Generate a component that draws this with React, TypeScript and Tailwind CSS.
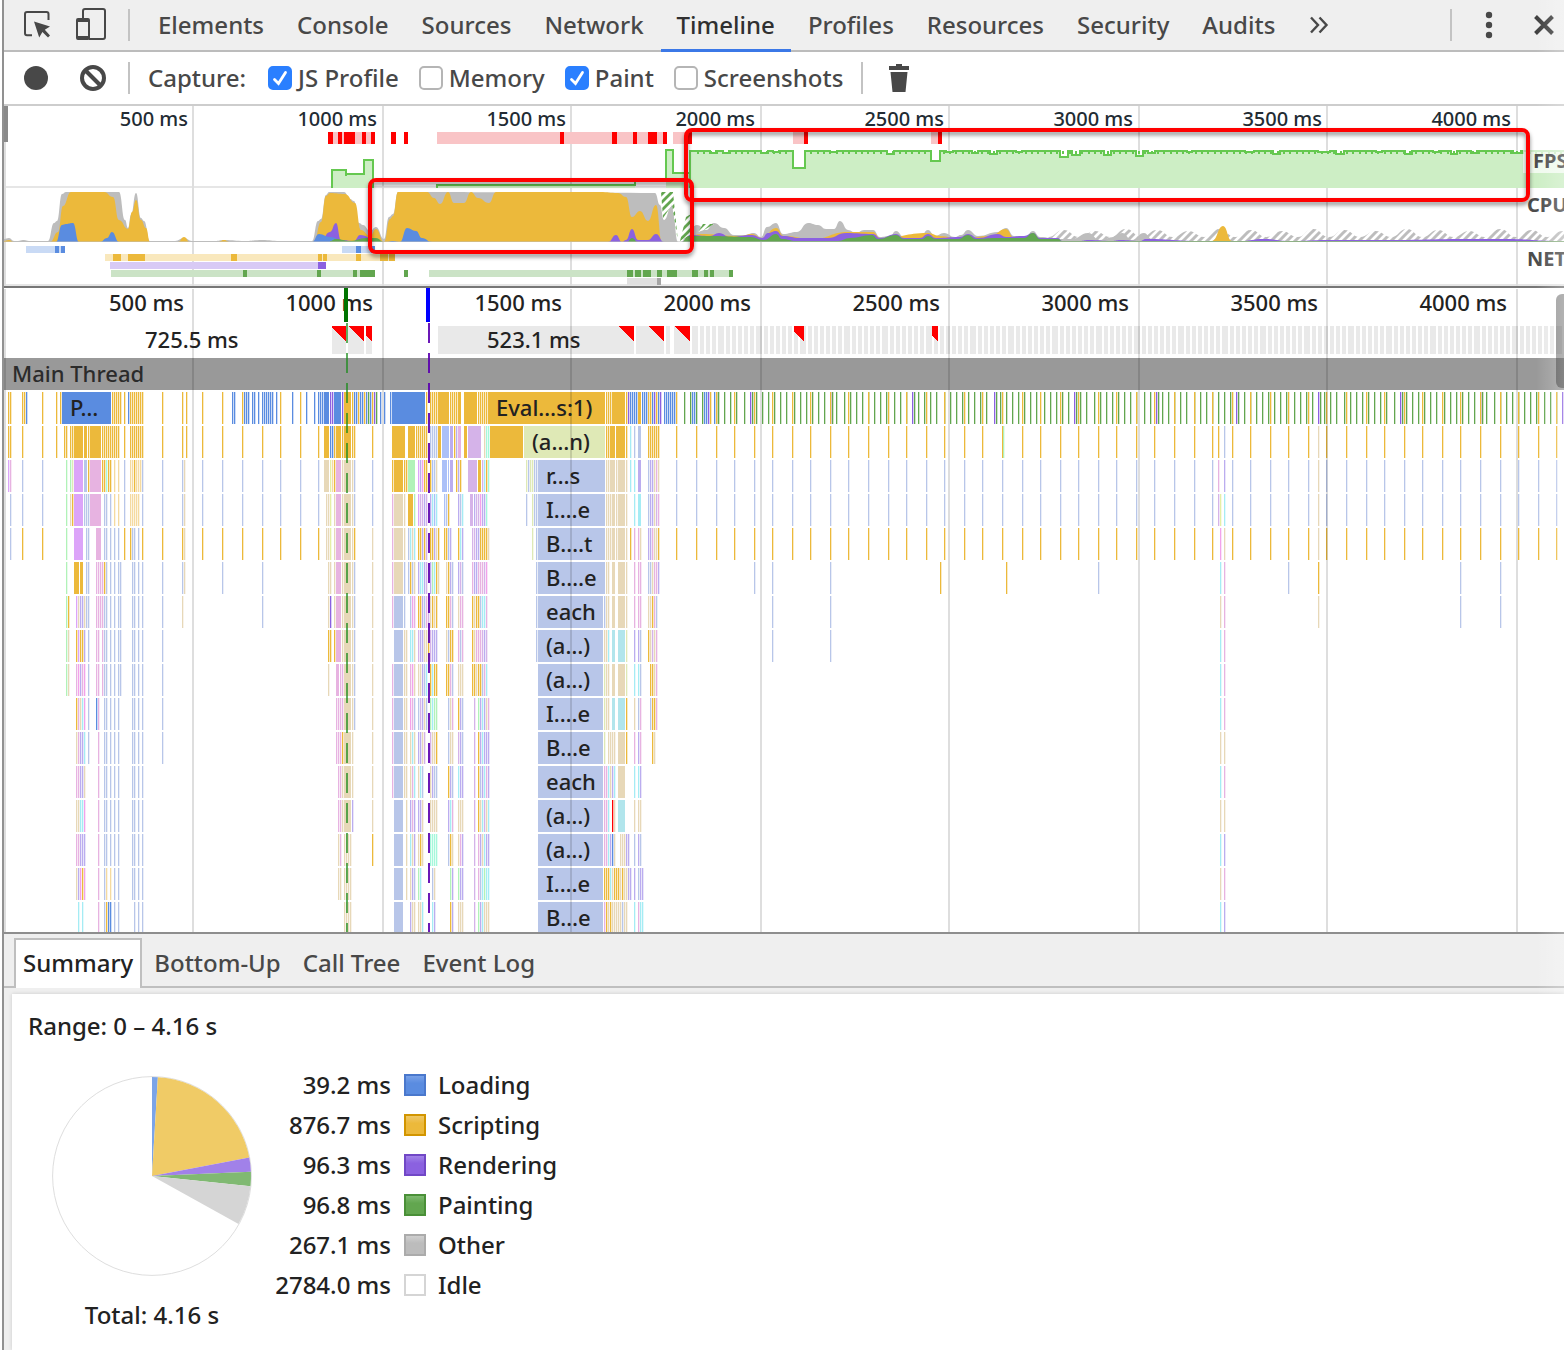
import React, { useState } from "react";

type Pt = [number, number];

/* ---------- palette ---------- */

const TINTS: Record<string, string> = {
  y: "#ecb93b", b: "#5a8ce0", v: "#8b61e0", g: "#62a64f", l: "#b8c6e9",
  t: "#e7d8b8", p: "#e7b3e1", m: "#dca4f9", o: "#d5b3e9", c: "#b1e5ec",
  q: "#a5ecf4", n: "#b1f2b8", k: "#dfe9b6", f: "#f3a2ea", a: "#abc0f8",
  u: "#bbadef", h: "#a5f8db", w: "#f5daa0", e: "#e5efa5", r: "#ff0000",
};

/* ---------- timeline scale ---------- */

const MS_LABELS = ["500 ms", "1000 ms", "1500 ms", "2000 ms", "2500 ms", "3000 ms", "3500 ms", "4000 ms"];
const GRID = [4, 192, 382, 570, 760, 948, 1138, 1326, 1516];
const FULL = 1560;

const even = (n: number) => Math.round(n / 2) * 2;
const FRAME_TICKS = Array.from({ length: 46 }, (_, i) => even(696 + 19.12 * i));
const tail = (c: string) => " " + FRAME_TICKS.map((x) => x + c).join(" ");
const TAIL0 =
  " " +
  Array.from({ length: 136 }, (_, i) => {
    const x = even(718 + 6.25 * i);
    return x + (i % 13 === 5 ? "vg" : "g");
  }).join(" ") +
  FRAME_TICKS.slice(1).map((x) => ` ${x}y`).join("");

/*
 * Flame rows. Each token is either "<x><colours>" (thin slices, two units
 * apart, "-" leaves a slot empty) or "<x>+<width><colour>" (a solid block).
 */
const ROWS: string[] = [
  "8yy 22yyb 42y 56y 60y 62+49b 112yyyyy 124y 128byyyyyyy 162y 182y 186y 202y 222y 232bb 242ybbb 252bb 258b 262bbbbbb 276b 280y 292b 300y 306b 314b 318bbb 324+5b 330vv 334+7b 342v 344+7y 352ybbybbybgbyvg 380b 384b 390b 392+33b 426y 430yyyy 438+11y 450yyyy 458+3y 464+13y 478yyyyy 488+117y 606yyy 612+4y 616+9y 626yvbbbb 638+3y 642bbbyybvybv 664bbbbbby 684g 690gbbg 702gbbvy 714bg" + TAIL0,
  "8yy 22y 42y 56y 64yy 70yy 74+9y 84+3y 88y 90+11y 102yyyyyyyyy 124y 130yyyyyyy 162y 182y 186y 202y 222y 242y 262y 280y 300y 318y 324+5y 330bby 336+5y 342y 344+7y 352yy 372y 392+13y 408+7y 416yyyyyy 430llll 438+3y 442+7a 450+3u 454yu 458+3p 464+3y 468+13o 484thh 490+33y 524+81k 606yy 610+5y 616+9y 626y 630q 634l 638+3l 648yyyyyy 676y" + tail("y") + " 1218y 1224l 1318t 1003n",
  "8mp 22l 42l 66n 70nk 74+9m 84+3l 88y 90+11p 102yyhyy 114w 118w 124l 130wwywww 142l 162l 182lt 202l 222l 242l 262l 280l 300l 318l 324+5t 330ewy 336+5p 342t 344+7t 352tl 372l 392y 394+9y 404yy 408+7n 418mufyy 430yalt 442+5a 448+1a 450+3u 456yuy 468+9o 478+3y 482oqyh 526klkkll 538+67l 606tt 610+5t 616t 618+7t 626t 630q 634q 638+3u 648luutpt 676l" + tail("l") + " 1218p 1224u 1318t",
  "10l 22l 42l 66n 70ty 74+9m 84lll 90+11p 104ll 110l 114w 118w 124l 130wwwww 142l 162l 182lt 202l 222l 242l 262l 280l 300l 318l 326tte 334t 336+5p 342t 344+7t 352tl 372l 392p 394+9t 404t 408+5y 414n 418moouo 430uqaq 444aly 458ulq 470+3o 474uoofuuh 526l 532kll 538+67l 606ttt 612+3t 616t 618+7t 626t 634q 638+3q 648luutop 676l" + tail("l") + " 1218o 1220e 1224q 1318t",
  "10l 22y 42y 66n 74+9m 86ll 96+5p 104ll 110l 114l 118l 124y 130yll 138l 142y 162y 182yt 202y 222y 242y 262y 280y 300y 318y 326tte 334t 336+5p 342t 344+7t 352ty 372t 392p 394+9t 404t 408lqtq 418yyuyo 430yyuty 444yyau 458yqu 472oouuyyyyt 532k 536l 538+67l 606ttt 612+3t 616t 618+7t 626t 630y 634p 638pt 648uuptty 676y" + tail("y") + " 1220f 1224t 1318t",
  "66n 74+5y 80+3y 86ll 96ppppyl 110l 114l 118ll 132ll 138l 142l 162l 182lt 222l 262l 328tt 334t 336+5p 342t 344+7t 352tl 372t 392p 394+9t 404l 408lylt 418uqquo 430unqyt 446tyul 458uol 472puupppof 536l 538+67l 606tt 612+3t 618+7t 626t 634p 638pp 648lltppu 754l 772l 830l 940y 1006y 1098l 1220q 1224p 1288l 1318y 1460l 1500l",
  "66ny 76mtuutll 96ppppll 110l 114l 118ll 132ll 138l 142l 162l 182t 262l 328tv 334t 336+5p 342t 344+7t 352tl 372t 392p 394+9l 404l 410lfp 418yyulpo 430tyty 446yypl 458tpp 472ytyylqqp 536l 538+65l 604ltt 612+3t 618+7t 626t 634p 638pp 648ttypl 772l 830l 1220t 1224p 1318t 1460l 1500l",
  "66nt 76ymyyu 88l 96pp 102pll 110l 114l 118ll 132ll 138l 142l 162l 328yy 334y 336+5p 342t 344+7t 352tl 372t 394+9l 404tt 410qqt 418ouutty 430ouuu 446tlyy 458plp 472ytpppouo 536l 538+65l 604ttq 612+3c 618+7c 626k 634u 638ul 648ytotp 772l 830l 1220q 1224p",
  "66nt 76pfupf 88l 96pp 102pll 110l 114l 118ll 132ll 138l 142l 162l 328t 336+3p 340pp 344+7t 352tl 372t 392p 394+9l 404tt 410pft 418ttulq 430yqyy 446yypl 458ttt 472yytyylpq 538+65l 604ktt 612+3t 618+7t 626k 634q 638ql 650yytp 1220q 1224p",
  "76yptqf 88l 96bp 104ll 110l 114l 118l 132ll 138l 142l 162l 336ppppt 344+7t 352tl 372t 392p 394+9l 404tt 410fpl 418loutl 430nqnn 448ltp 458yul 474o 478nuqutp 538+65l 604ktt 612+3c 618+7c 626y 634t 638lp 650lyyp 1220q 1224p",
  "76tpuuq 88l 98p 104ll 110l 114l 118l 132ll 138l 142l 162l 336pppy 344+7t 352t 372t 392p 394+9l 404tt 410tqt 418uuto 430otty 448ltt 458oul 474o 478yuquuu 538+65l 604k 608tttt 618+7t 626y 634p 638up 652yt 1220t 1224t",
  "76ppuut 98p 104ll 110l 114l 118l 132ll 138l 142l 338ppt 344+7t 352t 372t 392p 394+9l 404tt 410tpq 418tql 430tull 448yul 458quu 474o 478yluqpu 538+65l 604ppqtuq 618+7t 634q 638qu 1220q 1224p",
  "76ttqqf 98p 104ll 110l 114l 118l 132ll 138l 142l 338ppt 344+7t 352u 372t 394+9l 406t 410upu 418uut 430tttt 448uqp 458ttt 474o 478ytqotq 538+65l 604ppq 612rt 618+7c 634t 638tt 1220t 1224t",
  "76ppuuu 98p 104ll 110l 114l 118l 132ll 138l 142l 338tp 344tttt 372y 394+9l 406t 410qtu 418tyt 430hhhh 448lyt 458tpu 474o 478putquu 538+65l 604ppqubt 620tttuu 634l 638ul 1220q 1224u",
  "76tufyf 98p 104lw 110w 114l 118l 132ll 138l 142l 338tt 344tttt 394+9l 406t 410tul 418nq 432lt 450nu 458nuu 474o 478plqnqq 538+65l 604yyyqtyyy 620tyttuu 634u 638luu 1220t 1224p",
  "78q 82q 98p 104lybb 114l 118l 134l 138l 142l 344tttt 394+9l 410utt 418ttq 432qu 450yu 458ttt 474o 478nuqttt 538+65l 604pytytttttltt 634q 638pqq 1220q 1224u",
];

function Slices({ spec, y, h }: { spec: string; y: number; h: number }) {
  const out: React.ReactNode[] = [];
  spec.split(" ").forEach((token, ti) => {
    const m = /^(\d+)(?:\+(\d+))?(\D+)$/.exec(token);
    if (!m) return;
    const x = Number(m[1]);
    if (m[2]) {
      out.push(<rect key={ti} x={x} y={y} width={Number(m[2])} height={h} fill={TINTS[m[3]]} />);
      return;
    }
    m[3].split("").forEach((c, ci) => {
      if (c === "-") return;
      out.push(<rect key={`${ti}-${ci}`} x={x + ci * 2} y={y} width={1} height={h} fill={TINTS[c]} />);
      out.push(<rect key={`${ti}-${ci}s`} x={x + ci * 2 + 1} y={y} width={1} height={h} fill={TINTS[c]} opacity={0.3} />);
    });
  });
  return <>{out}</>;
}

const BLOCK_LABELS: { row: number; x: number; text: string }[] = [
  { row: 0, x: 70, text: "P…" },
  { row: 0, x: 496, text: "Eval…s:1)" },
  { row: 1, x: 532, text: "(a…n)" },
  ...["r…s", "I.…e", "B.…t", "B.…e", "each", "(a…)", "(a…)", "I.…e", "B…e", "each", "(a…)", "(a…)", "I.…e", "B…e"].map(
    (text, i) => ({ row: i + 2, x: 546, text })
  ),
];

const left = (x: number) => ({ left: `${((x - 4) / FULL) * 100}%` });

/* ---------- overview data ---------- */

function area(points: Pt[], base = 242) {
  let d = `M${points[0][0]},${base}L${points[0][0]},${points[0][1]}`;
  for (let i = 1; i < points.length; i++) {
    const [x0, y0] = points[i - 1];
    const [x1, y1] = points[i];
    const mx = (x0 + x1) / 2;
    d += `C${mx},${y0} ${mx},${y1} ${x1},${y1}`;
  }
  return d + `L${points[points.length - 1][0]},${base}Z`;
}

const OTHER: Pt[][] = [
  [[4, 239], [9, 238], [14, 241], [18, 241], [23, 240], [30, 241], [48, 241], [54, 223], [57, 221], [62, 194], [66, 192], [119, 192], [125, 220], [128, 228], [131, 215], [136, 193], [141, 218], [144, 221], [150, 241], [175, 241], [184, 238], [192, 241], [215, 241], [224, 240], [245, 241], [262, 240], [280, 241], [312, 241], [318, 221], [321, 219], [326, 195], [329, 192], [344, 192], [350, 199], [354, 201], [359, 223], [363, 225], [370, 231], [376, 227], [384, 239], [389, 217], [393, 214], [398, 192], [655, 193], [660, 205], [664, 220], [672, 205], [678, 242]],
  [[681, 242], [688, 232], [697, 225], [706, 230], [714, 223], [724, 228], [734, 235], [744, 235], [754, 233], [761, 237], [767, 227], [776, 223], [783, 234], [797, 232], [808, 223], [818, 225], [826, 229], [834, 229], [840, 221], [848, 230], [856, 233], [864, 230], [873, 230], [880, 237], [890, 236], [896, 231], [904, 237], [920, 237], [928, 230], [935, 236], [944, 233], [955, 237], [961, 235], [968, 230], [978, 236], [998, 232], [1006, 228], [1014, 236], [1026, 236], [1033, 231], [1040, 237], [1058, 239], [1072, 239], [1088, 233], [1100, 240], [1114, 237], [1122, 233], [1132, 240], [1144, 233], [1152, 239], [1170, 241], [1564, 241]],
];
const SCRIPT: Pt[][] = [
  [[4, 241], [9, 240], [14, 242], [50, 242], [58, 232], [63, 206], [71, 192], [104, 192], [113, 197], [119, 220], [128, 229], [132, 212], [136, 200], [141, 220], [146, 228], [150, 242], [178, 242], [184, 237], [190, 242], [218, 242], [224, 240], [230, 242], [314, 242], [321, 222], [326, 196], [330, 193], [345, 194], [355, 203], [361, 230], [370, 236], [376, 229], [384, 242], [390, 219], [393, 216], [398, 192], [427, 192], [434, 198], [440, 204], [448, 192], [454, 203], [464, 203], [471, 192], [478, 198], [489, 203], [496, 192], [600, 192], [618, 193], [626, 197], [632, 217], [640, 211], [648, 221], [656, 205], [662, 242]],
  [[685, 242], [700, 234], [740, 236], [752, 234], [762, 238], [776, 228], [784, 236], [812, 239], [848, 232], [873, 232], [880, 238], [928, 233], [940, 236], [960, 239], [990, 236], [1006, 229], [1014, 238], [1060, 241], [1212, 241], [1223, 226], [1232, 241], [1500, 241], [1504, 239], [1508, 241]],
];
const RENDER: Pt[][] = [
  [[320, 242], [330, 232], [336, 223], [341, 240], [354, 241], [360, 235], [376, 240], [384, 242]],
  [[608, 242], [616, 235], [622, 242], [626, 240], [632, 229], [638, 240], [648, 240], [656, 234], [664, 242]],
  [[682, 242], [690, 235], [710, 236], [719, 233], [730, 237], [752, 235], [762, 238], [768, 233], [776, 231], [783, 236], [800, 238], [828, 238], [846, 233], [873, 234], [880, 238], [896, 234], [904, 238], [920, 238], [928, 234], [936, 238], [960, 237], [968, 234], [978, 238], [998, 234], [1006, 237], [1024, 236], [1033, 233], [1040, 238], [1058, 238], [1062, 241], [1080, 241], [1088, 240], [1112, 241], [1120, 240], [1140, 241], [1146, 239], [1200, 241], [1240, 241], [1264, 239], [1290, 241], [1330, 240], [1390, 240], [1470, 239], [1504, 239], [1564, 241]],
];
const PAINT: Pt[][] = [
  [[330, 241], [336, 239], [350, 241], [366, 238], [376, 238], [384, 242]],
  [[627, 242], [632, 238], [638, 242]],
  [[682, 242], [688, 236], [710, 236], [750, 237], [764, 240], [776, 234], [782, 239], [796, 241], [838, 241], [850, 238], [872, 235], [878, 239], [896, 235], [904, 239], [922, 239], [928, 236], [936, 239], [958, 239], [968, 235], [976, 239], [996, 238], [1004, 238], [1024, 238], [1033, 233], [1040, 239], [1058, 239], [1062, 241], [1564, 241]],
];
const LOAD: Pt[][] = [
  [[56, 242], [62, 225], [66, 224], [73, 223], [79, 242], [100, 242], [107, 238], [112, 232], [119, 242]],
  [[312, 242], [319, 234], [330, 237], [344, 242]],
  [[388, 242], [392, 241], [400, 242], [407, 228], [416, 231], [422, 238], [432, 242]],
];
const HATCH: Pt[] = Array.from({ length: 35 }, (_, i) => [1048 + i * 15.6, i % 2 ? 231 - (i % 3) : 237] as Pt);

const FPS: Pt[] = [
  [690, 151], [710, 153], [716, 151], [723, 153], [729, 151], [761, 153], [768, 151], [773, 152], [779, 151], [793, 168],
  [805, 151], [830, 152], [837, 151], [887, 154], [894, 151], [931, 161], [940, 151], [946, 152], [953, 151], [972, 153],
  [978, 151], [990, 154], [997, 151], [1016, 152], [1022, 151], [1060, 157], [1068, 151], [1072, 155], [1080, 151],
  [1104, 155], [1111, 151], [1136, 156], [1143, 151], [1148, 153], [1155, 151], [1187, 152], [1192, 151], [1245, 152],
  [1254, 151], [1273, 154], [1280, 151], [1318, 152], [1330, 151], [1336, 154], [1344, 151], [1376, 152], [1382, 151],
  [1405, 154], [1412, 151], [1433, 152], [1439, 151], [1451, 154], [1457, 151], [1471, 153], [1477, 151], [1513, 153], [1521, 151],
];
const fpsLine = FPS.map(([x, y], i) => (i ? `H${x}V${y}` : `M${x},188V${y}`)).join("") + "H1564";
const FPS_TICKS = Array.from({ length: 138 }, (_, i) => 698 + i * 6.3).filter((x) => !(x > 790 && x < 806) && !(x > 929 && x < 941));

const STRIP: [number, number, string][] = [
  [328, 47, "#f9c4c6"], [437, 230, "#f9c4c6"], [673, 18, "#f9c4c6"], [793, 11, "#f9c4c6"], [931, 7, "#f9c4c6"],
  ...([[328, 5], [338, 4], [344, 11], [362, 4], [371, 4], [391, 5], [404, 4], [560, 4], [612, 5], [633, 4], [648, 9], [663, 4], [688, 4], [804, 4], [938, 4]] as Pt[]).map(
    ([x, w]) => [x, w, "#ff0000"] as [number, number, string]
  ),
];

const NET: [number, number, number, string][] = [
  [26, 29, 246, "#c9daf5"], [55, 4, 246, "#5a8ce0"], [59, 2, 246, "#c9daf5"], [61, 4, 246, "#5a8ce0"],
  [342, 33, 246, "#c9daf5"], [356, 5, 246, "#5a8ce0"], [371, 4, 246, "#5a8ce0"],
  [105, 285, 254, "#f9e8bd"], [113, 8, 254, "#ecb93b"], [128, 17, 254, "#ecb93b"], [231, 6, 254, "#ecb93b"],
  [318, 4, 254, "#ecb93b"], [323, 4, 254, "#ecb93b"], [356, 5, 254, "#ecb93b"], [380, 8, 254, "#ecb93b"], [389, 6, 254, "#ecb93b"],
  [110, 208, 262, "#d8caf5"], [318, 8, 262, "#8b61e0"],
  [111, 264, 270, "#cbe3c6"], [243, 4, 270, "#62a64f"], [317, 4, 270, "#62a64f"], [353, 4, 270, "#62a64f"], [360, 15, 270, "#62a64f"],
  [404, 4, 270, "#62a64f"], [429, 302, 270, "#cbe3c6"], [627, 6, 270, "#62a64f"], [635, 6, 270, "#62a64f"], [643, 8, 270, "#62a64f"],
  [657, 5, 270, "#62a64f"], [667, 10, 270, "#62a64f"], [692, 6, 270, "#62a64f"], [704, 4, 270, "#62a64f"], [710, 4, 270, "#62a64f"], [729, 4, 270, "#62a64f"],
  [627, 30, 278, "#e0e0e0"], [657, 4, 278, "#a5a5a5"],
];

/* ---------- components ---------- */

const TABS = ["Elements", "Console", "Sources", "Network", "Timeline", "Profiles", "Resources", "Security", "Audits"];

function Divider() {
  return <span className="h-8 w-0.5 shrink-0 bg-[#c3c3c3]" />;
}

function MainTabs() {
  const [active, setActive] = useState("Timeline");
  return (
    <header className="flex h-[52px] shrink-0 items-center border-b-2 border-[#bcbcbc] bg-[#efefef]">
      <button aria-label="Inspect element" className="ml-5 shrink-0">
        <svg width="26" height="28" viewBox="0 0 26 28" fill="none">
          <path d="M8 24.200H3a2 2 0 0 1-2-2V3a2 2 0 0 1 2-2h19.500a2 2 0 0 1 2 2v6" stroke="#484848" strokeWidth="2" />
          <path d="M10 10.500 26 15.500 20.800 18.800 26 24.500 24 26.500 18.400 21 15.200 26.500Z" fill="#484848" />
        </svg>
      </button>
      <button aria-label="Toggle device mode" className="ml-[26px] shrink-0">
        <svg className="-mt-0.5" width="30" height="32" viewBox="0 0 30 32" fill="none">
          <path d="M7 10V3a2 2 0 0 1 2-2h18a2 2 0 0 1 2 2v26a2 2 0 0 1-2 2H13" stroke="#484848" strokeWidth="2" />
          <path d="M2 10h10a2 2 0 0 1 2 2v18a2 2 0 0 1-2 2H2a2 2 0 0 1-2-2V12a2 2 0 0 1 2-2Zm0 4v14h10V14Z" fill="#484848" fillRule="evenodd" />
        </svg>
      </button>
      <span className="ml-[22px] flex"><Divider /></span>
      <nav className="ml-3 flex h-full items-stretch gap-px">
        {TABS.map((t) => (
          <button
            key={t}
            onClick={() => setActive(t)}
            className={
              t === active
                ? "-mb-0.5 border-b-[3px] border-[#3b78e7] px-4 text-[#303030]"
                : "-mb-0.5 border-b-[3px] border-transparent px-4"
            }
          >
            {t}
          </button>
        ))}
      </nav>
      <button aria-label="More tabs" className="ml-[18px] shrink-0">
        <svg width="20" height="18" viewBox="0 0 20 18" fill="none" stroke="#484848" strokeWidth="2.400">
          <path d="M2 1.500 9 9 2 16.500M10.500 1.500 17.500 9l-7 7.500" />
        </svg>
      </button>
      <div className="ml-auto flex items-center">
        <Divider />
        <button aria-label="Menu" className="ml-[33px]">
          <svg width="8" height="28" viewBox="0 0 8 28" fill="#484848">
            <circle cx="4" cy="4" r="3.200" />
            <circle cx="4" cy="14" r="3.200" />
            <circle cx="4" cy="24" r="3.200" />
          </svg>
        </button>
        <button aria-label="Close" className="ml-10 mr-[9px]">
          <svg width="22" height="22" viewBox="0 0 22 22" stroke="#404040" strokeWidth="4">
            <path d="M2.500 2.500 19.500 19.500M19.500 2.500 2.500 19.500" />
          </svg>
        </button>
      </div>
    </header>
  );
}

function Check({ label, checked }: { label: string; checked?: boolean }) {
  return (
    <label className="flex items-center">
      <span className="relative mr-1.5 flex size-6">
        <input
          type="checkbox"
          defaultChecked={checked}
          className="peer size-6 appearance-none rounded-[5px] border-2 border-[#b5b5b5] bg-white checked:border-[#2a7fff] checked:bg-[#2a7fff]"
        />
        <svg className="pointer-events-none absolute inset-0 hidden peer-checked:block" width="24" height="24" viewBox="0 0 24 24" fill="none" stroke="#fff" strokeWidth="2.800" strokeLinecap="round">
          <path d="M6.500 13.500 10.500 17.500 17.500 6.500" />
        </svg>
      </span>
      {label}
    </label>
  );
}

function CaptureBar() {
  return (
    <div className="flex h-[52px] shrink-0 items-center">
      <button aria-label="Record" className="ml-5 size-6 shrink-0 rounded-full bg-[#484848]" />
      <button aria-label="Clear" className="ml-8 shrink-0">
        <svg width="26" height="26" viewBox="0 0 26 26" fill="none" stroke="#484848" strokeWidth="4">
          <circle cx="13" cy="13" r="11" />
          <path d="M5 5 21 21" />
        </svg>
      </button>
      <span className="ml-[22px] flex"><Divider /></span>
      <span className="ml-[18px]">Capture:</span>
      <div className="ml-[22px] flex items-center gap-5">
        <Check label="JS Profile" checked />
        <Check label="Memory" />
        <Check label="Paint" checked />
        <Check label="Screenshots" />
      </div>
      <span className="ml-[18px] flex"><Divider /></span>
      <button aria-label="Collect garbage" className="ml-[26px]">
        <svg width="20" height="28" viewBox="0 0 20 28" fill="#484848">
          <path d="M7 0h6v2h7v4H0V2h7ZM1.500 8h17L16.500 28h-13Z" />
        </svg>
      </button>
    </div>
  );
}

function Ruler({ small }: { small?: boolean }) {
  return (
    <div
      className={
        small
          ? "pointer-events-none absolute inset-x-0 top-0 grid grid-cols-[190fr_repeat(7,189fr)_47fr] text-xl leading-[26px] text-[#222b33]"
          : "pointer-events-none absolute inset-x-0 top-0 grid grid-cols-[190fr_repeat(7,189fr)_47fr] text-[22px] leading-7 text-[#222]"
      }
    >
      {MS_LABELS.map((l) => (
        <span key={l} className={small ? "whitespace-nowrap pr-1.5 text-right" : "whitespace-nowrap pr-2.5 text-right"}>{l}</span>
      ))}
    </div>
  );
}

function Overview() {
  return (
    <section className="relative shrink-0 overflow-hidden border-y-2 border-t-[#cdcdcd] border-b-[#777]">
      <svg className="block h-[180px] w-full" viewBox="4 106 1560 180" preserveAspectRatio="none">
        <defs>
          <pattern id="idleHatch" width="8" height="8" patternUnits="userSpaceOnUse">
            <path d="M-2 2 2-2M-2 10 10-2M6 10 10 6" stroke="#bdbdbd" strokeWidth="3" />
          </pattern>
          <pattern id="paintHatch" width="8" height="8" patternUnits="userSpaceOnUse">
            <path d="M-2 2 2-2M-2 10 10-2M6 10 10 6" stroke="#62a64f" strokeWidth="2.800" />
          </pattern>
          <filter id="frameShadow" x="-5%" y="-20%" width="110%" height="150%">
            <feDropShadow dx="0" dy="3" stdDeviation="2" floodColor="#000" floodOpacity="0.45" />
          </filter>
        </defs>
        <path d="M4 187H1564M4 285H1564" stroke="#e6e6e6" strokeWidth="2" />
        {GRID.map((x) => (
          <rect key={x} x={x} y="106" width="2" height="180" fill="#dedede" />
        ))}
        {STRIP.map(([x, w, c], i) => (
          <rect key={i} x={x} y="132" width={w} height="12" fill={c} />
        ))}
        <path d="M332 188V170H346V174H364V160H373V188Z" fill="#cdeec5" />
        <path d="M332 188V170H346V176M346 174H364V160H373V188" fill="none" stroke="#65c850" strokeWidth="2" />
        <path d="M437 188V185H635V188ZM666 188V150H673V173H690V188Z" fill="#cdeec5" />
        <path d="M437 188V185H635V182M666 182V150H673V173H690" fill="none" stroke="#65c850" strokeWidth="2" />
        <path d={fpsLine + "V188Z"} fill="#cdeec5" />
        <path d={fpsLine + FPS_TICKS.map((x) => `M${Math.round(x)},151v3`).join("")} fill="none" stroke="#65c850" strokeWidth="2" />
        {OTHER.map((p, i) => <path key={i} d={area(p)} fill="#bdbdbd" />)}
        <path d={area(HATCH)} fill="url(#idleHatch)" />
        {SCRIPT.map((p, i) => <path key={i} d={area(p)} fill="#ecb93b" />)}
        {RENDER.map((p, i) => <path key={i} d={area(p)} fill="#8b61e0" />)}
        {LOAD.map((p, i) => <path key={i} d={area(p)} fill="#5a8ce0" />)}
        {PAINT.map((p, i) => <path key={i} d={area(p)} fill="#62a64f" />)}
        <path d="M661 192H673L678 242 672 205 663 218ZM680 241 686 217 691 214V234ZM698 232 703 224 714 224 704 230Z" fill="#fff" />
        <path d="M661 192H673L678 242 672 205 663 218ZM680 241 686 217 691 214V234ZM698 232 703 224 714 224 704 230Z" fill="url(#paintHatch)" />
        <path d="M4 241.500H1564" stroke="#bdbdbd" strokeWidth="1" opacity="0.500" />
        {NET.map(([x, w, y, c], i) => (
          <rect key={i} x={x} y={y} width={w} height="7" fill={c} />
        ))}
        <rect x="4" y="106" width="4" height="36" fill="#8a8a8a" />
      </svg>
      <Ruler small />
      <div className="absolute right-0 top-[43px] w-[41px] overflow-hidden bg-white/70 pl-2.5 text-xl font-bold leading-6 text-[#4c4c4c]">FPS</div>
      <div className="absolute right-0 top-[87px] w-[37px] overflow-hidden text-xl font-bold leading-6 text-[#4c4c4c]">CPU</div>
      <div className="absolute right-0 top-[141px] w-[37px] overflow-hidden text-xl font-bold leading-6 text-[#4c4c4c]">NET</div>
      <svg className="pointer-events-none absolute inset-0 h-full w-full" viewBox="4 106 1560 180" preserveAspectRatio="none">
        <g fill="none" stroke="#ff0000" strokeWidth="4" filter="url(#frameShadow)">
          <rect x="370" y="180" width="322" height="72" rx="6" />
          <rect x="686" y="130" width="842" height="70" rx="6" />
        </g>
      </svg>
    </section>
  );
}

const FRAMES: Pt[] = [
  [332, 14], [348, 16], [366, 6], [438, 196], [636, 28], [666, 4], [674, 16], [692, 6],
  ...Array.from({ length: 138 }, (_, i) => {
    const x = even(700 + i * 6.3);
    return [x, even(700 + (i + 1) * 6.3) - x - 2] as Pt;
  }),
];
const LONG_FRAMES: Pt[] = [[346, 14], [364, 16], [372, 6], [634, 16], [664, 16], [690, 16], [804, 10], [938, 6]];

function FlameChart() {
  return (
    <section className="relative shrink-0 overflow-hidden border-b-2 border-[#8e8e8e]">
      <svg className="block h-[644px] w-full" viewBox="4 288 1560 644" preserveAspectRatio="none" shapeRendering="crispEdges">
        {FRAMES.map(([x, w], i) => (
          <rect key={i} x={x} y="326" width={w} height="28" fill="#e9e9e9" />
        ))}
        <g fill="#ff0000">
          {LONG_FRAMES.map(([r, w]) => (
            <path key={r} d={`M${r} 326V342L${r - w} ${342 - w}V326Z`} />
          ))}
        </g>
        <rect x="4" y="358" width="1560" height="32" fill="#999" />
        {ROWS.map((r, i) => (
          <Slices key={i} spec={r} y={392 + i * 34} h={32} />
        ))}
        {GRID.map((x) => (
          <rect key={x} x={x} y="289" width="2" height="643" fill="#000" opacity="0.130" />
        ))}
      </svg>
      <Ruler />
      <span className="absolute top-[35px] text-[22px] leading-8 text-[#222]" style={left(145)}>725.5 ms</span>
      <span className="absolute top-[35px] text-[22px] leading-8 text-[#222]" style={left(487)}>523.1 ms</span>
      <h2 className="absolute left-2 top-[69px] text-[22px] leading-8 text-[#2b2b2b]">Main Thread</h2>
      <div className="pointer-events-none absolute inset-x-0 top-[103px] text-[22px] leading-8 text-[#222]">
        {BLOCK_LABELS.map((b) => (
          <span key={`${b.row}-${b.x}`} className="absolute whitespace-nowrap" style={{ ...left(b.x), top: b.row * 34 }}>
            {b.text}
          </span>
        ))}
      </div>
      <svg className="pointer-events-none absolute inset-0 h-full w-full" viewBox="4 288 1560 644" preserveAspectRatio="none" shapeRendering="crispEdges">
        <rect x="344" y="288" width="4" height="34" fill="#007300" />
        <rect x="426" y="288" width="4" height="34" fill="#0000ff" />
        <path d="M347 323V932" stroke="#1c8c1c" strokeWidth="2" strokeDasharray="20 10" opacity="0.700" />
        <path d="M429 323V932" stroke="#5b00b0" strokeWidth="2" strokeDasharray="20 10" opacity="0.900" />
      </svg>
      <div className="absolute right-0 top-1.5 h-[94px] w-2 rounded-l-md bg-black/40" />
    </section>
  );
}

const LEGEND = [
  { name: "Loading", ms: 39.2, pie: "#7ba4e8", swatch: "size-[22px] border-2 border-[#4a78cc] bg-linear-to-b from-[#78a1e8] to-[#5a8ce0] to-40%" },
  { name: "Scripting", ms: 876.7, pie: "#f0cb66", swatch: "size-[22px] border-2 border-[#d29500] bg-linear-to-b from-[#efc866] to-[#ecb93b] to-40%" },
  { name: "Rendering", ms: 96.3, pie: "#a181e9", swatch: "size-[22px] border-2 border-[#7148c6] bg-linear-to-b from-[#a283e8] to-[#8b61e0] to-40%" },
  { name: "Painting", ms: 96.8, pie: "#80b972", swatch: "size-[22px] border-2 border-[#4a9038] bg-linear-to-b from-[#7fba70] to-[#62a64f] to-40%" },
  { name: "Other", ms: 267.1, pie: "#d5d5d5", swatch: "size-[22px] border-2 border-[#ababab] bg-linear-to-b from-[#cfcfcf] to-[#bcbcbc] to-40%" },
  { name: "Idle", ms: 2784.0, pie: "none", swatch: "size-[22px] border-2 border-[#d5d5d5] bg-white" },
];

function Pie() {
  const total = LEGEND.reduce((s, l) => s + l.ms, 0);
  let at = 0;
  const point = (f: number) => `${100 + 99 * Math.sin(f * 2 * Math.PI)} ${100 - 99 * Math.cos(f * 2 * Math.PI)}`;
  return (
    <svg width="200" height="200" viewBox="0 0 200 200">
      <circle cx="100" cy="100" r="99.400" fill="#fff" stroke="#dedede" />
      {LEGEND.slice(0, 5).map((l) => {
        const from = at;
        at += l.ms / total;
        return <path key={l.name} d={`M100 100L${point(from)}A99 99 0 0 1 ${point(at)}Z`} fill={l.pie} />;
      })}
    </svg>
  );
}

function Details() {
  const [active, setActive] = useState("Summary");
  return (
    <section className="flex grow flex-col bg-[#efefef]">
      <nav className="flex h-[54px] shrink-0 items-end gap-0.5 border-b-2 border-[#bfbfbf] pl-2.5">
        {["Summary", "Bottom-Up", "Call Tree", "Event Log"].map((t) => (
          <button
            key={t}
            onClick={() => setActive(t)}
            className={
              t === active
                ? "-mb-0.5 h-[50px] border-2 border-b-0 border-[#bfbfbf] bg-white px-[7px] pb-0.5 text-[#222]"
                : "-mb-0.5 h-[50px] border-2 border-transparent px-2"
            }
          >
            {t}
          </button>
        ))}
      </nav>
      <div className="ml-2 mt-1.5 grow bg-white px-4 pt-4 text-[#222] shadow-[0_0_4px_rgba(0,0,0,0.15)]">
        <p className="leading-8">Range: 0 – 4.16 s</p>
        <div className="flex pt-[34px]">
          <figure className="ml-6 flex w-[200px] flex-col items-center">
            <Pie />
            <figcaption className="pt-[23px] leading-8">Total: 4.16 s</figcaption>
          </figure>
          <table className="ml-4 self-start">
            <tbody>
              {LEGEND.map((l) => (
                <tr key={l.name} className="h-10">
                  <td className="w-[123px] whitespace-nowrap p-0 pb-[22px] text-right leading-[18px]">{l.ms.toFixed(1)} ms</td>
                  <td className="p-0 pb-[22px] pl-[13px] pr-3"><span className="-my-0.5 flex h-[22px]"><span className={l.swatch} /></span></td>
                  <td className="p-0 pb-[22px] leading-[18px]">{l.name}</td>
                </tr>
              ))}
            </tbody>
          </table>
        </div>
      </div>
    </section>
  );
}

export default function App() {
  return (
    <main className="relative flex min-h-screen bg-white pl-0.5 font-['Noto_Sans','Open_Sans',sans-serif] text-2xl leading-8 font-medium text-[#484848]">
      <div className="flex min-w-0 grow flex-col overflow-hidden border-l-2 border-[#919191]">
        <MainTabs />
        <CaptureBar />
        <Overview />
        <FlameChart />
        <Details />
      </div>
      <div className="pointer-events-none absolute inset-y-0 right-0 w-7 bg-linear-to-r from-white/0 to-white/25" />
    </main>
  );
}
